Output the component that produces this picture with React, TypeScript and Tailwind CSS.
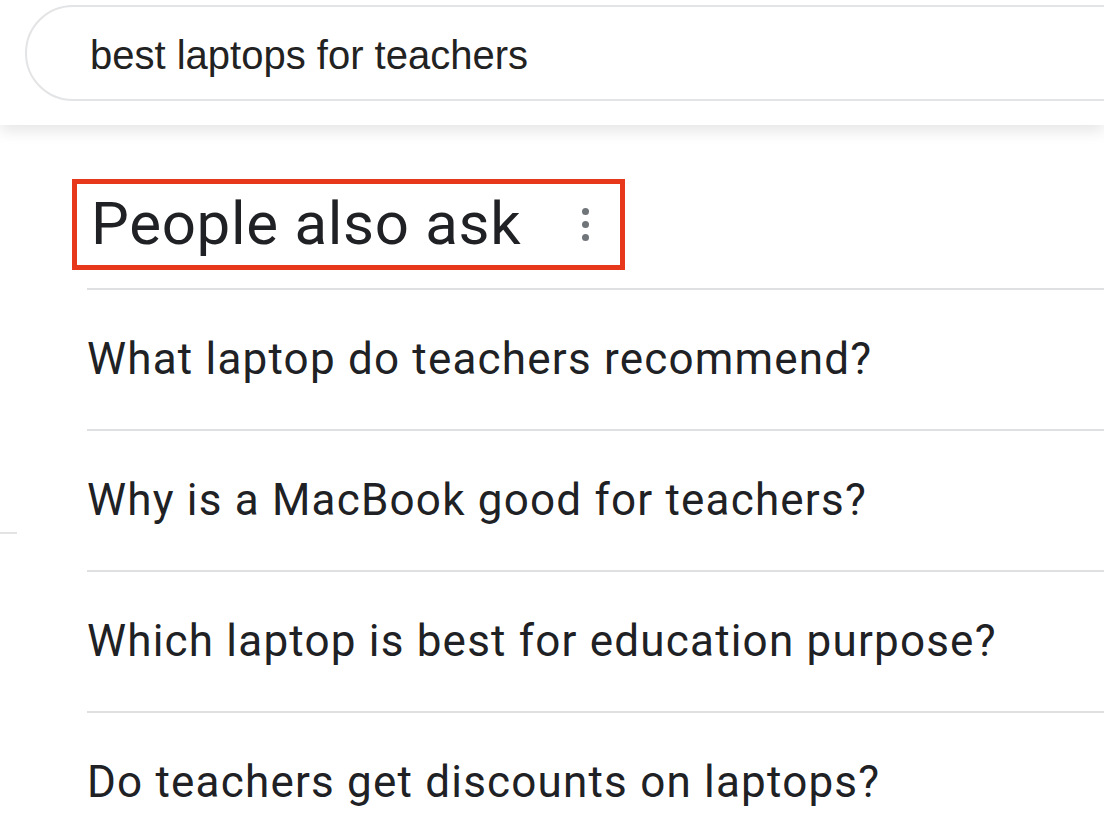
import React from 'react';

const questions = [
  'What laptop do teachers recommend?',
  'Why is a MacBook good for teachers?',
  'Which laptop is best for education purpose?',
  'Do teachers get discounts on laptops?',
];

function SearchHeader() {
  return (
    <header className="relative z-10 h-[125px] bg-white shadow-[0_6px_14px_rgba(0,0,0,0.10)] overflow-hidden">
      <div className="ml-[25px] mt-[5px] flex h-[96px] w-[1200px] items-center rounded-l-full border-2 border-[#e3e4e6] pl-[63px] pt-[3px]">
        <span className="text-[40px] text-[#222222] font-['Liberation_Sans',Arial,sans-serif]">
          best laptops for teachers
        </span>
      </div>
    </header>
  );
}

function MoreDots() {
  return (
    <div className="flex flex-col items-center gap-[6px]">
      <span className="h-[7px] w-[7px] rounded-full bg-[#70757a]" />
      <span className="h-[7px] w-[7px] rounded-full bg-[#70757a]" />
      <span className="h-[7px] w-[7px] rounded-full bg-[#70757a]" />
    </div>
  );
}

export default function App() {
  return (
    <div className="h-[827px] w-[1104px] overflow-hidden bg-white font-['Roboto',sans-serif] text-[#202124]">
      <SearchHeader />

      <div className="flex">
        {/* left rail */}
        <div className="w-[87px] shrink-0">
          <div className="mt-[407px] h-[2px] w-[17px] bg-[#e3e3e3]" />
        </div>

        <div className="flex-1">
          {/* People also ask heading */}
          <div className="-ml-[15px] mt-[54px] flex h-[91px] w-[553px] items-center border-[5px] border-[#e8381c] pl-[14px] pr-[31px]">
            <h2 className="flex-1 text-[60px] leading-none tracking-[0.7px] pb-[2px]">People also ask</h2>
            <MoreDots />
          </div>

          {/* questions */}
          <div className="mt-[18px]">
            {questions.map((q) => (
              <div key={q} className="border-t-2 border-[#dfe0e2]">
                <div className="flex h-[139px] items-center pb-[2px]">
                  <span className="text-[44px] leading-none tracking-[1.2px]">{q}</span>
                </div>
              </div>
            ))}
          </div>
        </div>
      </div>
    </div>
  );
}
